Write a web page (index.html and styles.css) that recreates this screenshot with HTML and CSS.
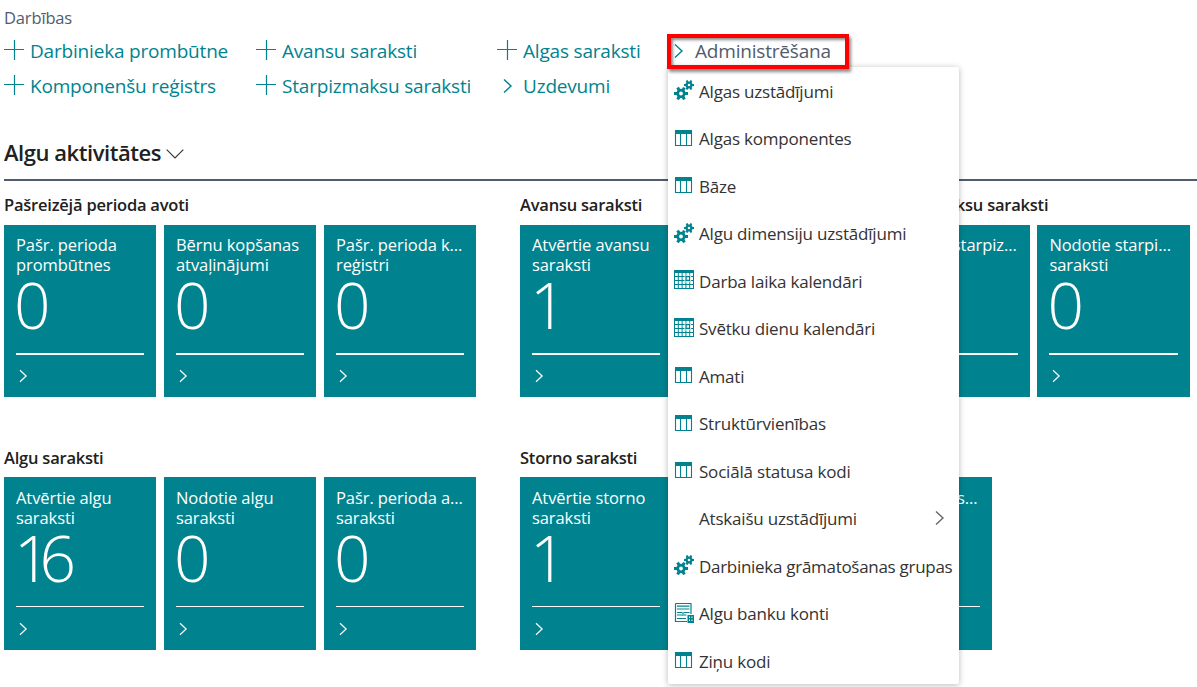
FILE: index.html
```
<!DOCTYPE html>
<html lang="lv">
<head>
<meta charset="utf-8">
<title>Algu aktivitātes</title>
<link rel="stylesheet" href="styles.css">
</head>
<body>
<svg class="sprite" aria-hidden="true">
  <symbol id="plus" viewBox="0 0 20 20"><path d="M0 9.5H20M10.5 0V20" fill="none" stroke="currentColor" stroke-width="1.2"/></symbol>
  <symbol id="chev" viewBox="0 0 10 16"><path d="M1 1.5L8 8L1 14.5" fill="none" stroke="currentColor" stroke-width="1.4"/></symbol>
  <symbol id="gears" viewBox="0 0 20 20">
    <g fill="none" stroke="currentColor">
      <circle cx="7" cy="13.5" r="3.3" stroke-width="2.8"/>
      <path d="M0 13.5H3M11 13.5H14M3.6 7.6L5.3 10.5M8.8 16.5L10.4 19.4M10.4 7.6L8.8 10.5M5.3 16.5L3.6 19.4" stroke-width="3"/>
      <circle cx="15" cy="5" r="2.4" stroke-width="2.3"/>
      <path d="M10 5H12.5M17.5 5H20M12.6 .6L13.8 2.8M16.2 7.2L17.4 9.4M17.4 .6L16.2 2.8M13.8 7.2L12.6 9.4" stroke-width="2.1"/>
    </g>
  </symbol>
  <symbol id="table" viewBox="0 0 20 20"><path d="M1.5 2.5H17.5V16.5H1.5ZM6.5 4V16.5M12.5 4V16.5" fill="none" stroke="currentColor" stroke-width="1.1"/><path d="M1 1H18V5H1Z" fill="currentColor"/></symbol>
  <symbol id="calendar" viewBox="0 0 20 20">
    <path d="M0 0H20V19H0Z" fill="currentColor"/>
    <path d="M1 4.5H19M1 8.5H19M1 12.5H19M1 16.5H19" fill="none" stroke="#fff" stroke-width="2.8" stroke-dasharray="2.8 1"/>
    <path d="M10.5 4.5L12.5 5.5H15L17 4.5L16.5 7V10L17 12.5L15 11.5H12.5L10.5 12.5L11 10V7Z" fill="currentColor" stroke="#fff" stroke-width=".8"/>
    <path d="M12.7 7.3H15V9.7H12.7Z" fill="#fff"/>
  </symbol>
  <symbol id="bank" viewBox="0 0 20 20">
    <path d="M1.5 .5H17V11M13 18.5H1.5V.5" fill="none" stroke="currentColor" stroke-width="1.2"/>
    <path d="M3 3.2H15.5M3 6H15.5M3 9.5H8M10 9.5H15.5M3 12H8M10 12H12.5M3 15.5H12M9 9V13" fill="none" stroke="currentColor" stroke-width="1.2"/>
    <path d="M13.5 12H20V20H13.5Z" fill="currentColor"/>
    <path d="M15 13.5H16V15H15ZM17.5 13.5H18.5V15H17.5ZM15 16.5H16V18H15ZM17.5 16.5H18.5V18H17.5Z" fill="#fff"/>
  </symbol>
</svg>
<div class="page">
  <div class="caption">Darbības</div>
  <div class="actions">
    <a class="action"><svg class="plus"><use href="#plus"/></svg><span>Darbinieka prombūtne</span></a>
    <a class="action"><svg class="plus"><use href="#plus"/></svg><span>Avansu saraksti</span></a>
    <a class="action"><svg class="plus"><use href="#plus"/></svg><span>Algas saraksti</span></a>
    <div class="dropdown">
      <a class="action active"><svg class="chev"><use href="#chev"/></svg><span>Administrēšana</span></a>
      <div class="highlight"></div>
      <div class="menu">
        <div class="item"><svg><use href="#gears"/></svg><span>Algas uzstādījumi</span></div>
        <div class="item"><svg class="grid"><use href="#table"/></svg><span>Algas komponentes</span></div>
        <div class="item"><svg class="grid"><use href="#table"/></svg><span>Bāze</span></div>
        <div class="item"><svg><use href="#gears"/></svg><span>Algu dimensiju uzstādījumi</span></div>
        <div class="item"><svg><use href="#calendar"/></svg><span>Darba laika kalendāri</span></div>
        <div class="item"><svg><use href="#calendar"/></svg><span>Svētku dienu kalendāri</span></div>
        <div class="item"><svg class="grid"><use href="#table"/></svg><span>Amati</span></div>
        <div class="item"><svg class="grid"><use href="#table"/></svg><span>Struktūrvienības</span></div>
        <div class="item"><svg class="grid"><use href="#table"/></svg><span>Sociālā statusa kodi</span></div>
        <div class="item"><svg></svg><span>Atskaišu uzstādījumi</span><svg class="more"><use href="#chev"/></svg></div>
        <div class="item"><svg><use href="#gears"/></svg><span class="long">Darbinieka grāmatošanas grupas</span></div>
        <div class="item"><svg><use href="#bank"/></svg><span>Algu banku konti</span></div>
        <div class="item"><svg class="grid"><use href="#table"/></svg><span>Ziņu kodi</span></div>
      </div>
    </div>
    <a class="action"><svg class="plus"><use href="#plus"/></svg><span>Komponenšu reģistrs</span></a>
    <a class="action"><svg class="plus"><use href="#plus"/></svg><span>Starpizmaksu saraksti</span></a>
    <a class="action task"><svg class="chev"><use href="#chev"/></svg><span>Uzdevumi</span></a>
  </div>
  <h1 class="title"><span>Algu aktivitātes</span><svg viewBox="0 0 18 10"><path d="M.7 .7L9 9L17.3 .7" fill="none" stroke="currentColor" stroke-width="1.1"/></svg></h1>
  <div class="row">
    <section class="group">
      <h2>Pašreizējā perioda avoti</h2>
      <div class="tiles">
        <div class="tile"><p>Pašr. perioda</p><p>prombūtnes</p><b>0</b><i><svg><use href="#chev"/></svg></i></div>
        <div class="tile"><p>Bērnu kopšanas</p><p>atvaļinājumi</p><b>0</b><i><svg><use href="#chev"/></svg></i></div>
        <div class="tile"><p>Pašr. perioda k...</p><p>reģistri</p><b>0</b><i><svg><use href="#chev"/></svg></i></div>
      </div>
    </section>
    <section class="group">
      <h2>Avansu saraksti</h2>
      <div class="tiles">
        <div class="tile"><p>Atvērtie avansu</p><p>saraksti</p><b>1</b><i><svg><use href="#chev"/></svg></i></div>
        <div class="tile"></div>
      </div>
    </section>
    <section class="group interim">
      <h2>Starpizmaksu saraksti</h2>
      <div class="tiles">
        <div class="tile"><p>Atvērtie starpiz...</p><p>saraksti</p><b>0</b><i><svg><use href="#chev"/></svg></i></div>
        <div class="tile"><p>Nodotie starpi...</p><p>saraksti</p><b>0</b><i><svg><use href="#chev"/></svg></i></div>
      </div>
    </section>
  </div>
  <div class="row second">
    <section class="group">
      <h2>Algu saraksti</h2>
      <div class="tiles">
        <div class="tile"><p>Atvērtie algu</p><p>saraksti</p><b>16</b><i><svg><use href="#chev"/></svg></i></div>
        <div class="tile"><p>Nodotie algu</p><p>saraksti</p><b>0</b><i><svg><use href="#chev"/></svg></i></div>
        <div class="tile"><p>Pašr. perioda a...</p><p>saraksti</p><b>0</b><i><svg><use href="#chev"/></svg></i></div>
      </div>
    </section>
    <section class="group">
      <h2>Storno saraksti</h2>
      <div class="tiles">
        <div class="tile"><p>Atvērtie storno</p><p>saraksti</p><b>1</b><i><svg><use href="#chev"/></svg></i></div>
        <div class="tile"></div>
        <div class="tile"><p>Pašr. perioda s...</p><p>saraksti</p><b>0</b><i><svg><use href="#chev"/></svg></i></div>
      </div>
    </section>
  </div>
</div>
</body>
</html>
```
FILE: styles.css
```
* { box-sizing: border-box; }
html, body { margin: 0; height: 687px; overflow: hidden; background: #fff; }
body { font-family: "Open Sans", "Noto Sans", sans-serif; color: #212121; }
.sprite { position: absolute; width: 0; height: 0; }
.page { padding-left: 4px; }
.caption { height: 33px; padding-top: 6px; font-size: 16.5px; line-height: 24px; letter-spacing: -.15px; color: #505c6d; }
.actions { display: grid; grid-template-columns: 252px 241px 171px 200px; grid-auto-rows: 35px; }
.action { display: flex; align-items: center; gap: 6px; color: #00838f; font-size: 19px; line-height: 35px; letter-spacing: -.19px; white-space: nowrap; }
.action span { padding-top: 1px; }
.action .plus { width: 20px; height: 20px; margin-top: -2px; }
.action .chev { width: 10px; height: 16px; }
.task { padding-left: 6px; gap: 10px; }
.active { padding-left: 6px; gap: 11px; color: #505c6d; }
.active .chev { color: #00838f; }
.dropdown { position: relative; }
.highlight { position: absolute; left: -1px; top: 1px; width: 182px; height: 35px; border: 4px solid #fe0000; box-shadow: 2px 3px 3px rgba(0,0,0,.45), inset 2px 2px 3px rgba(0,0,0,.45); z-index: 3; }
.menu { position: absolute; left: 0; top: 34px; width: 291px; height: 617px; background: #fff; border-radius: 2px; box-shadow: 0 1px 6px rgba(0,0,0,.28); z-index: 2; }
.item { display: flex; align-items: center; height: 47.5px; padding-left: 6px; gap: 5px; font-size: 17px; letter-spacing: -.2px; color: #333; white-space: nowrap; }
.item span { padding-top: 1px; }
.item .long { letter-spacing: -.29px; }
.item svg { flex: none; width: 20px; height: 20px; margin-top: -1px; color: #00838f; }
.item .grid { margin-top: 1px; }
.item .more { width: 10px; height: 16px; margin: -1px 14px 0 auto; color: #666; }
.title { display: flex; align-items: center; gap: 5px; height: 78px; margin: 0; padding-top: 22px; border-bottom: 2px solid #505c6d; font-size: 22px; font-weight: 600; line-height: 30px; letter-spacing: -.45px; }
.title svg { width: 18px; height: 10px; margin-top: 3px; color: #333; }
.row { display: flex; gap: 44px; height: 216px; }
.second { height: 254px; padding-top: 37px; }
.group h2 { height: 44px; margin: 0; padding-top: 12px; font-size: 16.5px; font-weight: 600; line-height: 24px; letter-spacing: -.22px; white-space: nowrap; }
.tiles { display: flex; gap: 8px; }
.tile { width: 152px; height: 172px; padding: 10px 12px 0; background: #00838f; color: #fff; }
.tile p { margin: 0; font-size: 16.5px; line-height: 20px; letter-spacing: -.08px; white-space: nowrap; }
.tile b { display: block; height: 78px; margin-left: -2px; font-size: 64px; line-height: 60px; font-weight: 300; letter-spacing: -11px; }
.tile i { display: block; border-top: 2px solid #fff; padding: 14px 0 0 3px; line-height: 0; }
.tile i svg { width: 9px; height: 14px; }
.interim { margin-left: 1.4px; }
.interim .tiles { gap: 7.5px; }
.interim .tile { width: 152.5px; }
.second .group h2 { height: 43px; }
.second .tile { height: 173px; padding-top: 11px; }
.second .tile i { border-top-width: 1px; padding-top: 15px; }
```
